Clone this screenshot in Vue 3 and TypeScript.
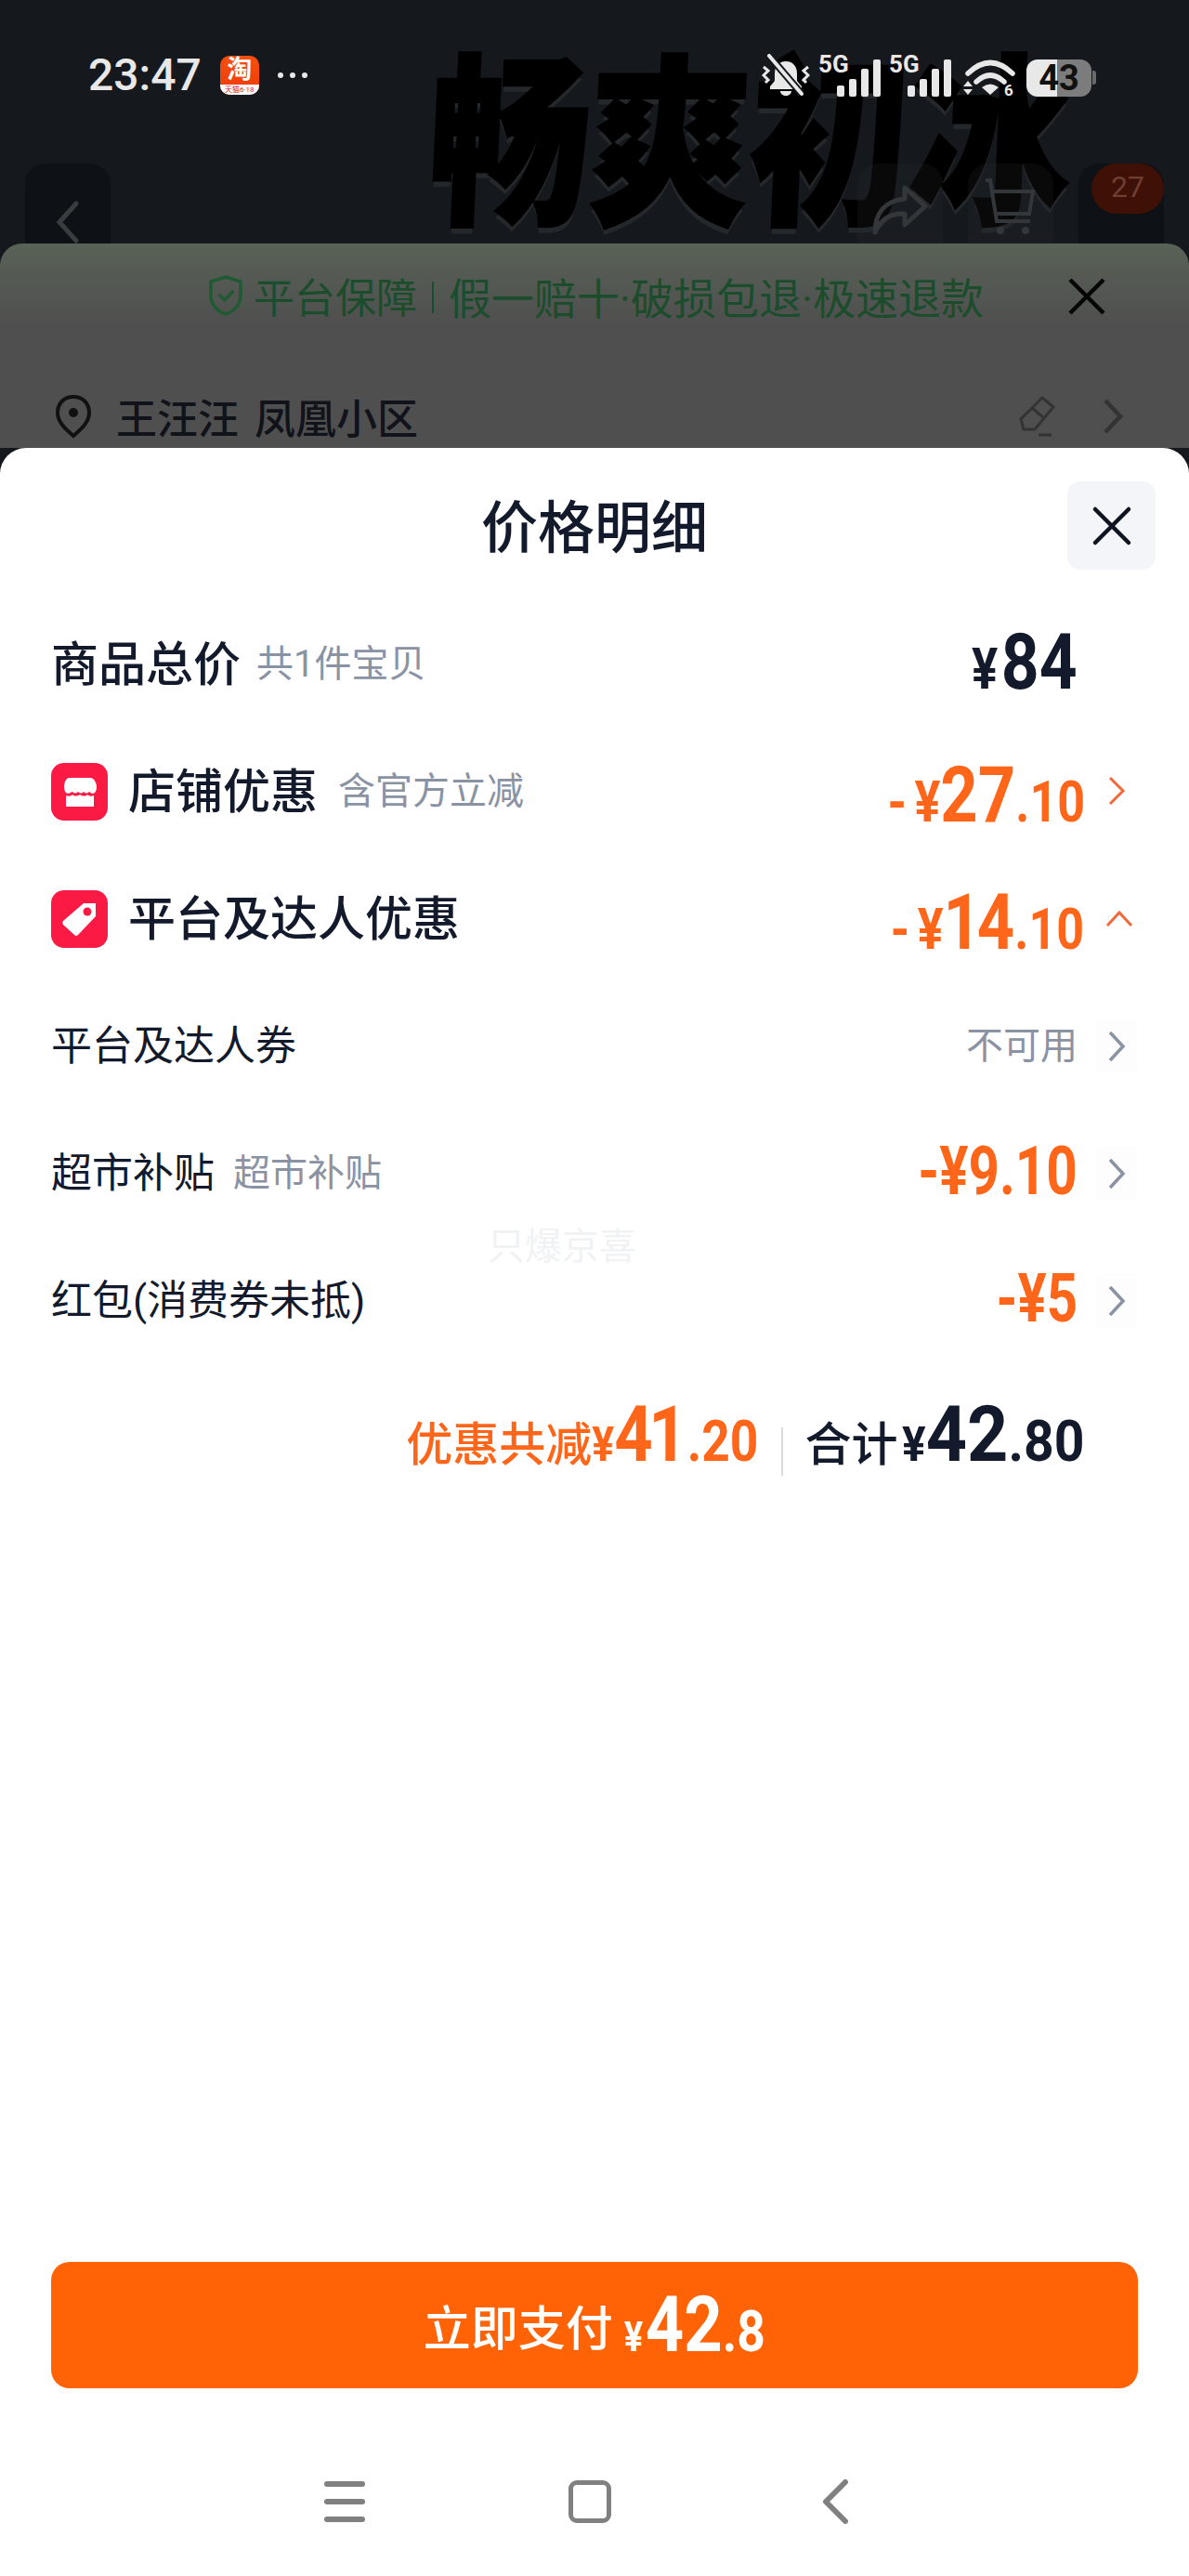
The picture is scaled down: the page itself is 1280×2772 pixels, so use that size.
<script setup lang="ts">
interface SubRow {
  label: string;
  note?: string;
  minus?: string;
  muted?: string;
}

const subRows: SubRow[] = [
  { label: "平台及达人券", muted: "不可用" },
  { label: "超市补贴", note: "超市补贴", minus: "9.10" },
  { label: "红包(消费券未抵)", minus: "5" },
];
</script>

<template>
  <div class="page">
    <section class="hero">
      <div class="poster">畅爽初冰</div>
      <div class="status">
        <div class="status-left">
          <span class="time">23:47</span>
          <div class="app-icon">
            <span class="app-glyph">淘</span>
            <span class="app-strip">天猫6·18</span>
          </div>
          <div class="dots"><i></i><i></i><i></i></div>
        </div>
        <div class="status-right">
          <svg class="bell" width="52" height="46" viewBox="0 0 52 46">
            <path d="M26 8c-8 0-12 6-12 13v8l-5 6v3h34v-3l-5-6v-8c0-7-4-13-12-13z" fill="#e8e8e8" />
            <path d="M20 40h12c0 3-3 5-6 5s-6-2-6-5z" fill="#e8e8e8" />
            <path d="M8 2l35 41" stroke="#15191e" stroke-width="8" />
            <path d="M8 2l35 41" stroke="#e8e8e8" stroke-width="4" stroke-linecap="round" />
            <path d="M2 14l5 4-5 5 5 5-3 3M50 14l-5 4 5 5-5 5 3 3" stroke="#e8e8e8" stroke-width="3" fill="none" />
          </svg>
          <div v-for="n in 2" :key="n" class="signal">
            <span class="net">5G</span>
            <i class="bar b1"></i><i class="bar b2"></i><i class="bar b3"></i><i class="bar b4"></i>
          </div>
          <svg class="wifi" width="56" height="42" viewBox="0 0 56 42">
            <path d="M5 17Q29 -6 53 17" stroke="#e8e8e8" stroke-width="5.5" fill="none" stroke-linecap="round" />
            <path d="M14 26Q29 12 44 26" stroke="#e8e8e8" stroke-width="5.5" fill="none" stroke-linecap="round" />
            <path d="M20 32Q29 25 38 32L29 40z" fill="#e8e8e8" />
            <path d="M0 31l5-6 5 6zM0 34l5 6 5-6z" fill="#e8e8e8" />
            <text x="44" y="41" class="wifi-six">6</text>
          </svg>
          <div class="battery"><span>43</span></div>
        </div>
      </div>
      <div class="nav">
        <div class="nav-btn">
          <svg width="30" height="46" viewBox="0 0 30 46">
            <path d="M24 3L6 23l18 20" stroke="#3a3d40" stroke-width="5" fill="none" stroke-linecap="round" />
          </svg>
        </div>
        <div class="nav-right">
          <div class="nav-btn share">
            <svg width="62" height="60" viewBox="0 0 62 60">
              <path d="M36 4l22 20-22 20V32C20 31 10 38 4 52c0-22 12-34 32-36z" fill="none" stroke="#34373a" stroke-width="5" stroke-linejoin="round" />
            </svg>
          </div>
          <div class="nav-btn cart">
            <svg width="60" height="62" viewBox="0 0 60 62">
              <path d="M3 2h5l7 44h36M10 14h44l-4 24H13" fill="none" stroke="#34373a" stroke-width="4" />
              <circle cx="19" cy="56" r="4" fill="#34373a" />
              <circle cx="46" cy="56" r="4" fill="#34373a" />
            </svg>
          </div>
          <div class="nav-btn more"><span class="cart-badge">27</span></div>
        </div>
      </div>
    </section>

    <section class="behind">
      <div class="guarantee">
        <svg width="38" height="46" viewBox="0 0 38 46">
          <path d="M19 3l16 5v15c0 10-7 17-16 20C10 40 3 33 3 23V8z" fill="none" stroke="#1f5a33" stroke-width="3.5" />
          <path d="M12 22l6 6 9-10" fill="none" stroke="#1f5a33" stroke-width="3.5" />
        </svg>
        <span class="guarantee-head">平台保障</span>
        <i class="guarantee-sep"></i>
        <span class="guarantee-text">假一赔十·破损包退·极速退款</span>
        <svg class="guarantee-close" width="42" height="42" viewBox="0 0 42 42">
          <path d="M3 3l36 36M39 3L3 39" stroke="#050505" stroke-width="4.5" />
        </svg>
      </div>
      <div class="address">
        <svg width="42" height="48" viewBox="0 0 42 48">
          <path d="M21 3C11 3 4 10 4 20c0 11 10 19 17 25 7-6 17-14 17-25C38 10 31 3 21 3z" fill="none" stroke="#111" stroke-width="4" />
          <circle cx="21" cy="20" r="5" fill="#111" />
        </svg>
        <span class="address-text">王汪汪 凤凰小区</span>
        <svg class="address-edit" width="42" height="46" viewBox="0 0 42 46">
          <path d="M26 3l12 10-20 24H6L3 26zM15 14l12 10M22 43h14" fill="none" stroke="#333" stroke-width="3" />
        </svg>
        <svg width="24" height="40" viewBox="0 0 24 40">
          <path d="M4 3l16 17L4 37" fill="none" stroke="#333" stroke-width="4.5" />
        </svg>
      </div>
    </section>

    <section class="sheet">
      <span class="watermark">只爆京喜</span>
      <header class="sheet-head">
        <h1 class="sheet-title">价格明细</h1>
        <button class="sheet-close">
          <svg width="44" height="44" viewBox="0 0 44 44">
            <path d="M4 4l36 36M40 4L4 40" stroke="#0e1420" stroke-width="4.5" stroke-linecap="round" />
          </svg>
        </button>
      </header>

      <div class="rows">
        <div class="row">
          <span class="row-title">商品总价</span>
          <span class="row-note first-note">共1件宝贝</span>
          <div class="amount dark total-amount">
            <span class="yen small-yen">¥</span><span class="int big-84">84</span>
          </div>
        </div>

        <div class="row">
          <span class="badge">
            <svg width="38" height="36" viewBox="0 0 38 36">
              <path d="M8 3h22c4 0 7 5 7 10 0 3-1 5-2 6-3 2-4 0-6-1-2 2-4 2-6 0-2 2-4 2-6 0-2 2-4 2-6 0-3 1-4 3-7 1-1-1-2-3-2-6C2 8 4 3 8 3z" fill="#fff" />
              <path d="M4 22c3 1 5 1 7-1 2 2 5 2 8 0 3 2 6 2 8 0 2 2 4 2 7 1v12H4z" fill="#fff" />
            </svg>
          </span>
          <span class="row-title">店铺优惠</span>
          <span class="row-note">含官方立减</span>
          <div class="amount orange wide-amount">
            <span class="minus">-</span><span class="yen">¥</span><span class="int">27</span><span class="dec">.10</span>
          </div>
          <svg class="chev" width="20" height="34" viewBox="0 0 20 34">
            <path d="M3 3l14 14L3 31" fill="none" stroke="#f0693a" stroke-width="3" />
          </svg>
        </div>

        <div class="row">
          <span class="badge">
            <svg width="44" height="44" viewBox="0 0 44 44">
              <path d="M26 5h13v14L20 39a3 3 0 0 1-4 0L4 28a3 3 0 0 1 0-4z" fill="#fff" />
              <circle cx="30" cy="14" r="4.5" fill="#fb1a44" />
            </svg>
          </span>
          <span class="row-title">平台及达人优惠</span>
          <div class="amount orange wide-amount">
            <span class="minus">-</span><span class="yen">¥</span><span class="int narrow">14</span><span class="dec">.10</span>
          </div>
          <svg class="chev chev-up" width="30" height="20" viewBox="0 0 30 20">
            <path d="M2 17L15 3l13 14" fill="none" stroke="#f0693a" stroke-width="3" />
          </svg>
        </div>

        <div v-for="item in subRows" :key="item.label" class="row">
          <span class="sub-title">{{ item.label }}</span>
          <span v-if="item.note" class="row-note sub-note">{{ item.note }}</span>
          <span v-if="item.muted" class="muted">{{ item.muted }}</span>
          <div v-if="item.minus" class="amount orange sub-amount">-¥{{ item.minus }}</div>
          <span class="gray-chev">
            <svg width="20" height="36" viewBox="0 0 20 36">
              <path d="M3 3l14 15L3 33" fill="none" stroke="#8a93a3" stroke-width="3.5" />
            </svg>
          </span>
        </div>
      </div>

      <div class="summary">
        <span class="sum-label orange-text">优惠共减</span>
        <div class="amount orange sum-saved">
          <span class="yen sum-yen">¥</span><span class="int narrow">41</span><span class="dec">.20</span>
        </div>
        <i class="sum-sep"></i>
        <span class="sum-label sum-total-label">合计</span>
        <div class="amount dark sum-total">
          <span class="yen sum-yen">¥</span><span class="int">42</span><span class="dec">.80</span>
        </div>
      </div>

      <button class="pay">
        <span class="pay-label">立即支付</span>
        <span class="amount white pay-amount">
          <span class="yen pay-yen">¥</span><span class="int pay-int">42</span><span class="dec pay-dec">.8</span>
        </span>
      </button>

      <footer class="softkeys">
        <div class="key-menu"><i></i><i></i><i></i></div>
        <div class="key-home"></div>
        <svg width="30" height="48" viewBox="0 0 30 48">
          <path d="M26 3L5 24l21 21" fill="none" stroke="#808080" stroke-width="6" stroke-linecap="round" stroke-linejoin="round" />
        </svg>
      </footer>
    </section>
  </div>
</template>

<style scoped>
.page {
  width: 1280px;
  height: 2772px;
  display: flex;
  flex-direction: column;
  background: #15191e;
  font-family: Roboto, "Noto Sans CJK SC", sans-serif;
  overflow: hidden;
}

.hero {
  position: relative;
  height: 262px;
  flex: none;
  overflow: hidden;
  display: flex;
  flex-direction: column;
}
.poster {
  position: absolute;
  left: 468px;
  top: 30px;
  font-family: "Noto Sans CJK SC", sans-serif;
  font-size: 198px;
  font-weight: 900;
  line-height: 220px;
  white-space: nowrap;
  color: #000;
  -webkit-text-stroke: 3px #000;
  text-shadow: 0 7px 0 #24282b;
  transform: scaleX(0.87) skewX(-3deg);
  transform-origin: left top;
}

.status {
  position: relative;
  height: 46px;
  margin-top: 58px;
  padding: 0 105px 0 95px;
  display: flex;
  align-items: center;
  justify-content: space-between;
}
.status-left {
  display: flex;
  align-items: center;
}
.time {
  font-size: 48px;
  font-weight: 500;
  color: #e8e8e8;
  line-height: 46px;
}
.app-icon {
  width: 42px;
  height: 42px;
  margin-left: 20px;
  border-radius: 10px;
  overflow: hidden;
  background: linear-gradient(#f4500e, #ef3a0a);
  display: flex;
  flex-direction: column;
  align-items: center;
}
.app-glyph {
  font-size: 27px;
  line-height: 31px;
  font-weight: 700;
  color: #fff;
}
.app-strip {
  width: 100%;
  height: 11px;
  background: #fff;
  color: #d22;
  font-size: 8px;
  line-height: 11px;
  text-align: center;
}
.dots {
  display: flex;
  gap: 7px;
  margin-left: 20px;
}
.dots i {
  width: 6px;
  height: 6px;
  border-radius: 50%;
  background: #e8e8e8;
}
.status-right {
  display: flex;
  align-items: flex-end;
}
.signal {
  position: relative;
  width: 50px;
  height: 40px;
  margin-left: 26px;
  display: flex;
  gap: 5px;
  align-items: flex-end;
  justify-content: flex-end;
}
.net {
  position: absolute;
  left: -17px;
  top: -6px;
  font-size: 26px;
  font-weight: 700;
  line-height: 22px;
  color: #e8e8e8;
}
.bar {
  width: 8px;
  border-radius: 2px;
  background: #e8e8e8;
}
.b1 { height: 12px; }
.b2 { height: 19px; }
.b3 { height: 30px; }
.b4 { height: 40px; }
.wifi {
  margin-left: 13px;
}
.wifi-six {
  font: 700 17px Roboto, sans-serif;
  fill: #e8e8e8;
}
.battery {
  position: relative;
  width: 70px;
  height: 40px;
  margin-left: 12px;
  border-radius: 12px;
  background: linear-gradient(90deg, #e8e8e8 47%, #7c7c7c 47%);
  display: flex;
  align-items: center;
  justify-content: center;
}
.battery::after {
  content: "";
  position: absolute;
  right: -5px;
  top: 12px;
  width: 4px;
  height: 15px;
  border-radius: 0 3px 3px 0;
  background: #6a6a6a;
}
.battery span {
  font-size: 38px;
  font-weight: 700;
  line-height: 40px;
  color: #111;
}

.nav {
  position: relative;
  margin-top: 72px;
  padding: 0 27px;
  display: flex;
  justify-content: space-between;
}
.nav-right {
  display: flex;
  gap: 27px;
}
.nav-btn {
  position: relative;
  width: 92px;
  height: 110px;
  border-radius: 22px;
  background: #0e1115;
  display: flex;
  justify-content: center;
  padding-top: 40px;
  box-sizing: border-box;
}
.nav-btn.share,
.nav-btn.cart {
  background: rgba(40, 42, 44, 0.22);
  padding-top: 22px;
}
.nav-btn.cart {
  padding-top: 16px;
}
.cart-badge {
  position: absolute;
  left: 14px;
  top: 0;
  width: 78px;
  height: 54px;
  border-radius: 27px;
  background: #3f1006;
  color: #6e3e33;
  font-size: 32px;
  line-height: 50px;
  text-align: center;
}

.behind {
  height: 220px;
  flex: none;
  border-radius: 24px 24px 0 0;
  background: linear-gradient(#586256, #4f4f4f 40%);
}
.guarantee {
  position: relative;
  height: 112px;
  padding-left: 224px;
  display: flex;
  align-items: center;
  color: #1b4d2c;
}
.guarantee-head {
  margin-left: 11px;
  font-size: 44px;
}
.guarantee-text {
  font-size: 46px;
}
.guarantee-sep {
  width: 2px;
  height: 34px;
  margin: 4px 16px 0;
  background: #1b4d2c;
}
.guarantee-close {
  position: absolute;
  left: 1149px;
  top: 36px;
}
.address {
  height: 90px;
  margin-top: 29px;
  padding: 0 70px 0 58px;
  display: flex;
  align-items: center;
}
.address-text {
  margin-left: 25px;
  font-size: 44px;
  font-weight: 500;
  color: #11131a;
  flex: 1;
  word-spacing: 6px;
}
.address-edit {
  margin-right: 48px;
}

.sheet {
  position: relative;
  flex: 1;
  border-radius: 28px 28px 0 0;
  background: #fff;
  display: flex;
  flex-direction: column;
}
.watermark {
  position: absolute;
  left: 525px;
  top: 827px;
  font-size: 40px;
  color: #f1f2f4;
}
.sheet-head {
  position: relative;
  height: 164px;
  flex: none;
  display: flex;
  justify-content: center;
}
.sheet-title {
  margin: 54px 0 0;
  font-size: 61px;
  line-height: 66px;
  font-weight: 500;
  color: #121a2c;
}
.sheet-close {
  position: absolute;
  right: 36px;
  top: 36px;
  width: 95px;
  height: 95px;
  border: 0;
  border-radius: 14px;
  background: #f3f5f9;
  display: flex;
  align-items: center;
  justify-content: center;
}

.rows {
  padding: 0 68px 0 55px;
}
.row {
  height: 137px;
  display: flex;
  align-items: center;
}
.row-title {
  padding-bottom: 8px;
  font-size: 51px;
  font-weight: 500;
  color: #121a2c;
}
.row-note {
  margin-left: 22px;
  padding-bottom: 8px;
  font-size: 40px;
  color: #8a93a3;
}
.first-note {
  margin-left: 17px;
}
.sub-title {
  padding-bottom: 8px;
  font-size: 44px;
  color: #121a2c;
}
.sub-note {
  margin-left: 20px;
}
.badge {
  width: 61px;
  height: 62px;
  margin-right: 22px;
  border-radius: 14px;
  background: #fb1a44;
  display: flex;
  align-items: center;
  justify-content: center;
  flex: none;
}
.amount {
  font-family: Roboto, sans-serif;
  font-weight: 700;
  white-space: nowrap;
  line-height: 1;
  transform-origin: right center;
}
.row .amount,
.row .muted {
  margin-left: auto;
}
.orange { color: #ff661a; }
.dark { color: #121a2c; }
.white { color: #fff; }
.total-amount {
  margin-right: 52px;
  margin-bottom: 4px;
  transform: scaleX(0.85);
}
.small-yen {
  font-size: 50px;
  margin-right: 4px;
}
.big-84 {
  font-size: 88px;
}
.wide-amount {
  margin-top: 8px;
  transform: scaleX(0.84);
}
.minus {
  font-size: 62px;
  margin-right: 10px;
}
.yen {
  font-size: 62px;
}
.int {
  font-size: 84px;
}
.narrow {
  letter-spacing: -5px;
  margin-right: 5px;
}
.dec {
  font-size: 62px;
}
.chev {
  margin-left: 24px;
  margin-bottom: 2px;
}
.chev-up {
  margin-left: 23px;
  margin-right: -8px;
  margin-bottom: 0;
}
.sub-amount {
  margin-bottom: 4px;
  font-size: 72px;
  transform: scaleX(0.81);
}
.muted {
  padding-bottom: 8px;
  font-size: 40px;
  color: #8a93a3;
}
.gray-chev {
  width: 44px;
  height: 58px;
  margin-left: 20px;
  margin-right: -12px;
  background: #fdfdfd;
  display: flex;
  align-items: center;
  justify-content: center;
}

.summary {
  height: 120px;
  margin-top: 34px;
  padding-right: 113px;
  display: flex;
  justify-content: flex-end;
  align-items: baseline;
}
.sum-label {
  font-size: 50px;
  font-weight: 500;
  color: #121a2c;
}
.orange-text {
  color: #ff661a;
}
.sum-saved {
  margin-left: -29px;
  transform: scaleX(0.86);
}
.sum-total {
  margin-left: -17px;
  transform: scaleX(0.92);
}
.sum-total-label {
  margin-right: 4px;
}
.sum-yen {
  font-size: 52px;
}
.sum-sep {
  align-self: center;
  width: 2px;
  height: 52px;
  margin: 0 24px;
  background: #d9dbe0;
}

.pay {
  width: 1170px;
  height: 136px;
  margin: 812px 0 0 55px;
  border: 0;
  border-radius: 20px;
  background: #ff6306;
  color: #fff;
  display: flex;
  align-items: center;
  justify-content: center;
  flex: none;
}
.pay-label {
  font-family: Roboto, "Noto Sans CJK SC", sans-serif;
  font-size: 51px;
  font-weight: 500;
  margin-right: 12px;
}
.pay-amount {
  margin-right: -24px;
  transform: scaleX(0.86);
  transform-origin: left center;
}
.pay-yen {
  font-size: 44px;
  margin-right: 3px;
}
.pay-int {
  font-size: 84px;
}
.pay-dec {
  font-size: 62px;
}

.softkeys {
  height: 48px;
  margin-top: 98px;
  display: flex;
  align-items: center;
  padding-left: 349px;
}
.key-menu {
  width: 44px;
  height: 44px;
  display: flex;
  flex-direction: column;
  justify-content: space-between;
}
.key-menu i {
  height: 6px;
  border-radius: 3px;
  background: #808080;
}
.key-home {
  width: 46px;
  height: 46px;
  margin-left: 219px;
  box-sizing: border-box;
  border: 5px solid #808080;
  border-radius: 9px;
}
.softkeys svg {
  margin-left: 226px;
}
</style>
